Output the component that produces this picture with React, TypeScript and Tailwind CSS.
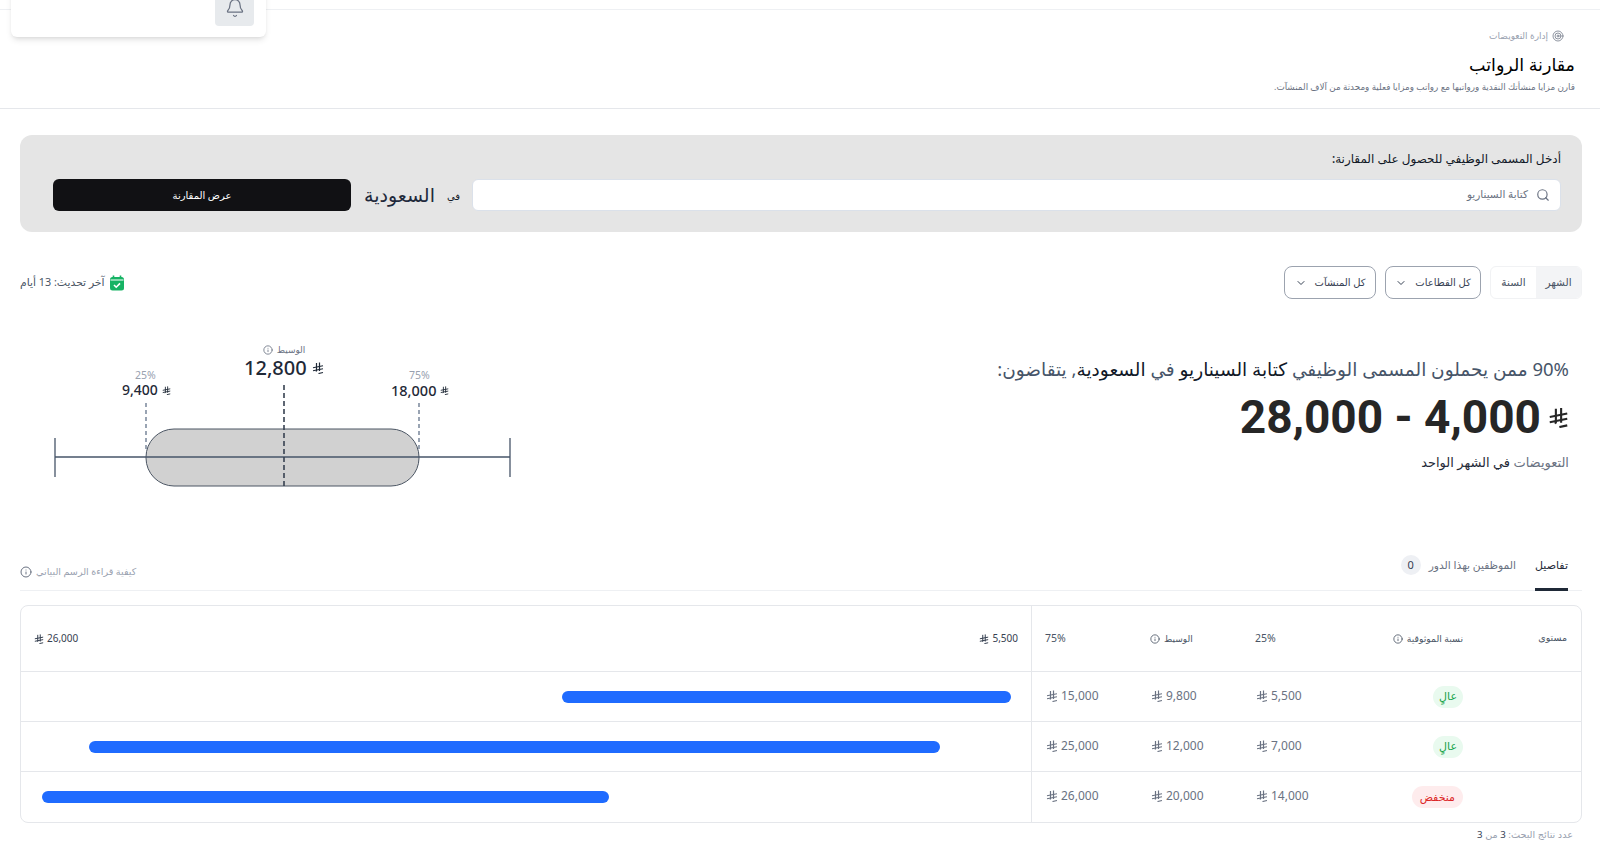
import { Bell, ChevronDown, Info, Search, Target } from "lucide-react";

function Riyal({ className }: { className?: string }) {
    return (
        <svg viewBox="0 0 24 24" fill="none" stroke="currentColor" strokeWidth="2.4" className={className}>
            <path d="M9 2v15.5l-1 1.5M15 1v17" />
            <path d="M2 11.5l20-4M2 17.5l20-4M13 23l9-2" />
        </svg>
    );
}

function CalendarFilled() {
    return (
        <svg viewBox="0 0 16 16" className="size-4">
            <rect x="1" y="2" width="14" height="13.5" rx="2.5" fill="#16b364" />
            <path d="M4.5 0.5v3M11.5 0.5v3" stroke="#16b364" strokeWidth="1.6" />
            <path d="M1.5 5h13" stroke="#ffffff" strokeWidth="1" />
            <path d="M5 10l2.2 2.2L11 8.4" fill="none" stroke="#ffffff" strokeWidth="1.6" />
        </svg>
    );
}

function Money({ value, className, iconClass }: { value: string; className?: string; iconClass?: string }) {
    return (
        <span dir="ltr" className={`inline-flex items-center gap-[3px] ${className ?? ""}`}>
            <Riyal className={iconClass ?? "size-3"} />
            <span>{value}</span>
        </span>
    );
}

const rows = [
    { label: "عالٍ", low: true, p25: 5500, mid: "9,800", p75: 15000 },
    { label: "عالٍ", low: true, p25: 7000, mid: "12,000", p75: 25000 },
    { label: "منخفض", low: false, p25: 14000, mid: "20,000", p75: 26000 },
];

const cols = "grid grid-cols-[104px_130px_105px_105px_105px_1fr]";

function SpreadChart() {
    return (
        <div className="relative h-[145px] w-[480px]">
            <svg className="absolute left-0 top-[2px]" width="480" height="145" viewBox="0 0 480 145" fill="none">
                <rect x="112" y="85" width="273" height="57" rx="28" fill="#d1d1d1" stroke="#4b5563" />
                <path d="M21 94v39M476 94v39M21 113h455" stroke="#475569" strokeWidth="1.3" />
                <path d="M112 59v47M385 59v47" stroke="#64748b" strokeWidth="1.3" strokeDasharray="4 3" />
                <path d="M250 41v101" stroke="#374151" strokeWidth="1.6" strokeDasharray="5 3" />
            </svg>
            <div className="absolute left-[150px] top-[2px] flex w-[200px] flex-col items-center">
                <span className="flex items-center gap-1 text-[9px] leading-[12px] text-gray-500">
                    الوسيط
                    <Info className="size-2.5" />
                </span>
            </div>
            <div dir="ltr" className="absolute left-[210px] top-[16px] flex items-center gap-[5px] text-[20px] font-medium leading-[20px] text-[#1f2937]">
                12,800 <Riyal className="size-[12px]" />
            </div>
            <span dir="ltr" className="absolute left-[101px] top-[28px] text-[10.5px] leading-[10px] text-gray-400">25%</span>
            <div dir="ltr" className="absolute left-[88px] top-[40px] flex items-center gap-1 text-[14px] font-medium leading-[16px] text-[#1f2937]">
                9,400 <Riyal className="size-[9px]" />
            </div>
            <span dir="ltr" className="absolute left-[375px] top-[28px] text-[10.5px] leading-[10px] text-gray-400">75%</span>
            <div dir="ltr" className="absolute left-[357px] top-[40px] flex items-center gap-1 text-[14.5px] font-medium leading-[16px] text-[#1f2937]">
                18,000 <Riyal className="size-[9px]" />
            </div>
        </div>
    );
}

export default function App() {
    return (
        <div dir="rtl" className="relative h-[851px] w-full overflow-hidden bg-white font-['Noto_Sans','DejaVu_Sans',sans-serif] text-[#111827]">
            <div className="h-[10px] border-b border-[#eef0f3]" />

            {/* floating account card, scrolled up under the top edge */}
            <div className="absolute left-[11px] top-[-20px] h-[57px] w-[255px] rounded-md bg-white shadow-md">
                <div className="absolute left-[204px] top-[7px] flex size-[39px] items-center justify-center rounded bg-[#e7eaed] pt-[2px] text-gray-500">
                    <Bell className="size-5" strokeWidth={1.5} />
                </div>
                <span className="absolute right-[71px] top-[6px] text-xs text-gray-600">محمد عبدالله</span>
            </div>

            <header className="h-[99px] border-b border-[#e5e7eb] px-[25px] pt-[19px]">
                <div className="flex items-center gap-[4px] pr-[11px] text-[9px] leading-[14px] text-gray-400">
                    <Target className="size-3 text-gray-500" strokeWidth={1.5} />
                    <span>إدارة التعويضات</span>
                </div>
                <h1 className="mt-[8px] text-[17.5px] font-medium leading-[26px] text-black">مقارنة الرواتب</h1>
                <p className="mt-[3px] text-[8.8px] leading-[14px] text-gray-500">قارن مزايا منشأتك النقدية ورواتبها مع رواتب ومزايا فعلية ومحدثة من آلاف المنشآت.</p>
            </header>

            <main className="pl-[20px] pr-[18px] pt-[26px]">
                <section className="h-[97px] rounded-xl bg-[#e5e5e5] pl-[33px] pr-[21px] pt-[15px]">
                    <label className="block text-[12px] font-medium leading-[18px]">أدخل المسمى الوظيفي للحصول على المقارنة:</label>
                    <div className="mt-[11px] flex items-center">
                        <div className="flex h-[32px] flex-1 items-center gap-2 rounded-md border border-[#dbe1ea] bg-white px-[10px] text-[10.5px] text-gray-500">
                            <Search className="size-3.5 text-gray-500" />
                            كتابة السيناريو
                        </div>
                        <span className="mr-[13px] flex w-[11px] justify-center pt-[3px] text-[10px]">في</span>
                        <span className="mr-[13px] text-[19px] text-[#1e293b]">السعودية</span>
                        <button className="mr-[13px] h-[32px] w-[298px] rounded-md bg-[#111114] text-[10px] font-medium text-white">عرض المقارنة</button>
                    </div>
                </section>

                <div className="mt-[34px] flex h-[33px] items-center justify-between">
                    <div className="flex items-center gap-[9px]">
                        <div className="flex h-[33px] w-[92px] overflow-hidden rounded-md border border-[#f1f2f4] text-[10.5px] text-gray-600">
                            <span className="flex w-[45px] items-center justify-center bg-[#f3f4f6]">الشهر</span>
                            <span className="flex flex-1 items-center justify-center">السنة</span>
                        </div>
                        <button className="flex h-[33px] w-[96px] items-center justify-center gap-2 rounded-lg border border-[#9ca3af] text-[10px] text-gray-700">
                            كل القطاعات <ChevronDown className="size-3" />
                        </button>
                        <button className="flex h-[33px] w-[92px] items-center justify-center gap-2 rounded-lg border border-[#9ca3af] text-[10px] text-gray-700">
                            كل المنشآت <ChevronDown className="size-3" />
                        </button>
                    </div>
                    <div className="flex items-center gap-1 text-[10.8px] text-gray-600">
                        <CalendarFilled />
                        آخر تحديث: 13 أيام
                    </div>
                </div>

                <section className="mt-[41px] flex items-start justify-between pr-[13px]">
                    <div className="pt-[15px]">
                        <p className="text-[18.5px] leading-[28px] text-[#475569]">
                            90% ممن يحملون المسمى الوظيفي <b className="font-medium text-[#111827]">كتابة السيناريو</b> في <b className="font-medium text-[#111827]">السعودية</b>, يتقاضون:
                        </p>
                        <div dir="ltr" className="mt-[9px] flex items-center justify-end gap-[7px] font-['Roboto',sans-serif] text-[46px] font-bold leading-[50px] text-[#262626]">
                            28,000 - 4,000 <Riyal className="size-[21px]" />
                        </div>
                        <p className="mt-[10px] text-[13px] leading-[20px] text-gray-500">
                            التعويضات <span className="text-[#1f2937]">في الشهر الواحد</span>
                        </p>
                    </div>
                    <div className="ml-[14px] pt-[2px]">
                        <SpreadChart />
                    </div>
                </section>

                <div className="mt-[58px] flex h-[46px] items-start justify-between border-b border-[#eef0f3] pr-[14px]">
                    <div className="flex items-center gap-[19px]">
                        <span className="relative flex h-[45px] items-center pb-[5px] text-[11px] text-gray-800">
                            تفاصيل
                            <span className="absolute bottom-[-1px] left-0 right-0 h-[3px] bg-[#1f2937]" />
                        </span>
                        <span className="flex items-center gap-2 pb-[5px] text-[10.7px] text-gray-500">
                            الموظفين بهذا الدور
                            <span dir="ltr" className="flex size-[20px] items-center justify-center rounded-full bg-[#eef0f4] text-[11px] text-gray-700">0</span>
                        </span>
                    </div>
                    <span className="mt-[20px] flex items-center gap-1 text-[9.6px] text-gray-400">
                        كيفية قراءة الرسم البياني <Info className="size-3 text-gray-500" />
                    </span>
                </div>

                <div className="mt-[14px] overflow-hidden rounded-lg border border-[#e5e7eb] text-[12px]">
                    <div className={`${cols} h-[66px] items-center border-b border-[#e5e7eb] text-gray-600`}>
                        <span className="pr-[14px] text-[9.5px]">مستوى</span>
                        <span className="flex items-center gap-1 pr-[14px] text-[9.3px]">نسبة الموثوقية <Info className="size-2.5" /></span>
                        <span dir="ltr" className="pl-[13px] text-[10.5px]">25%</span>
                        <span dir="ltr" className="flex items-center gap-1 pl-[13px] text-[9px]"><Info className="size-2.5" /> الوسيط</span>
                        <span dir="ltr" className="pl-[13px] text-[10.5px]">75%</span>
                        <div dir="ltr" className="flex h-full items-center justify-between border-r border-[#e5e7eb] px-[13px] text-[10px] text-[#374151]">
                            <Money value="26,000" iconClass="size-2.5" />
                            <Money value="5,500" iconClass="size-2.5" />
                        </div>
                    </div>
                    {rows.map((r) => (
                        <div key={r.p25} className={`${cols} h-[50px] items-center border-b border-[#e5e7eb] text-gray-500 last:border-b-0`}>
                            <span />
                            <span className="pr-[14px]">
                                <span className={`inline-flex h-[22px] items-center rounded-full text-[11px] ${r.low ? "bg-[#e9faef] px-[6px] text-[#16a34a]" : "bg-[#feeced] px-[8px] text-[#dc2626]"}`}>{r.label}</span>
                            </span>
                            <span dir="ltr" className="pl-[14px]"><Money value={r.p25.toLocaleString("en-US")} /></span>
                            <span dir="ltr" className="pl-[14px]"><Money value={r.mid} /></span>
                            <span dir="ltr" className="pl-[14px]"><Money value={r.p75.toLocaleString("en-US")} /></span>
                            <div className="flex h-full items-center border-r border-[#e5e7eb] pr-[20px]">
                                <div
                                    className="h-[12px] rounded-full bg-[#1f6bff]"
                                    style={{
                                        marginRight: ((r.p25 - 5500) / 20500) * 969,
                                        width: ((r.p75 - r.p25) / 20500) * 969,
                                    }}
                                />
                            </div>
                        </div>
                    ))}
                </div>

                <p className="mt-[5px] pr-[9px] text-[9.7px] text-gray-400">
                    عدد نتائج البحث: <span className="text-gray-700">3</span> من <span className="text-gray-700">3</span>
                </p>
            </main>
        </div>
    );
}
